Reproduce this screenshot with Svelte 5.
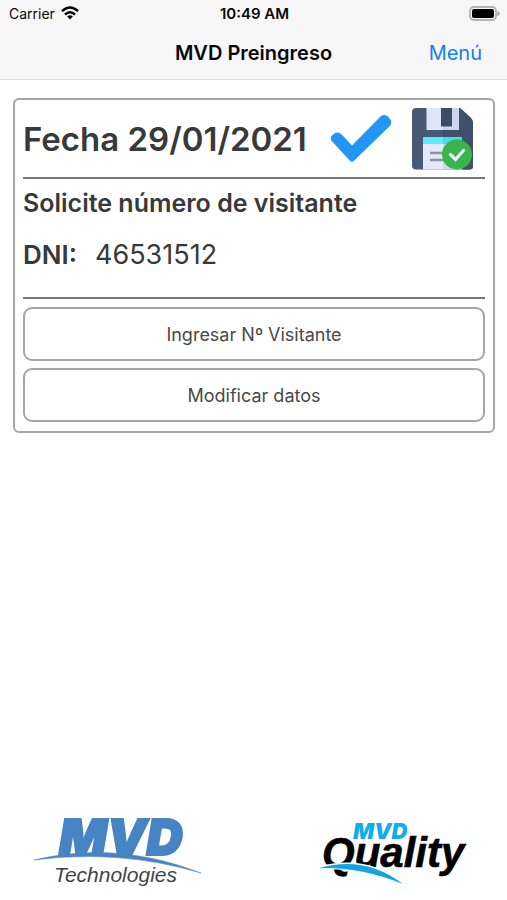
<script>
  const date = '29/01/2021';
  const dni = '46531512';
  const actions = ['Ingresar Nº Visitante', 'Modificar datos'];
</script>

<div class="screen">
  <header>
    <div class="status">
      <span class="carrier">
        Carrier
        <svg width="18" height="14" viewBox="0 0 18 14" aria-hidden="true">
          <g fill="none" stroke="#000" stroke-width="2.5">
            <path d="M1 5.2Q9-2.2 17 5.2" />
            <path d="M4 8.5Q9 3.9 14 8.5" />
          </g>
          <path d="M6.2 10.4Q9 8 11.8 10.4L9 13.4Z" />
        </svg>
      </span>
      <span class="time">10:49 AM</span>
      <svg class="battery" width="31" height="15" viewBox="0 0 31 15" aria-hidden="true">
        <rect x="1" y="1" width="26" height="13" rx="4" fill="#f7f6f7" stroke="#b3b3b3" stroke-width="1.8" />
        <rect x="3" y="3" width="22" height="9" rx="2" />
        <path d="M28.3 5Q30.7 5.5 30.7 7.5T28.3 10Z" fill="#aaa" />
      </svg>
    </div>
    <nav>
      <h1>MVD Preingreso</h1>
      <button class="menu" type="button">Menú</button>
    </nav>
  </header>

  <main>
    <section class="card">
      <div class="top">
        <h2>Fecha {date}</h2>
        <svg class="check" width="62" height="50" viewBox="0 0 62 50" aria-hidden="true">
          <path d="M2.2 21.3Q-.8 24.5 2.4 27.7L20 46.8Q22 48.6 24 46.8L59.5 12.2Q63 8.2 59.8 4.7L58 2.6Q54 -.8 50 3L22 31.5L12.2 20.9Q8.5 17.4 5 19Z" fill="#2196f3" />
        </svg>
        <svg class="disk" width="62" height="62" viewBox="0 0 62 62" aria-hidden="true">
          <path d="M4 0H48L58.5 9.5Q61 12 61 15V58Q61 61.5 57.5 61.5H4Q0 61.5 0 57.5V4Q0 0 4 0Z" fill="#475975" />
          <path d="M31 0H48L58.5 9.5Q61 12 61 15V58Q61 61.5 57.5 61.5H31Z" fill="#3f506b" />
          <path d="M14.5 0H47V22H14.5Z" fill="#dfe5f9" />
          <path d="M31 0H47V22H31Z" fill="#ccd5ec" />
          <path d="M29 0H40V18.5H29Z" fill="#3c4d67" />
          <path d="M11 29H50V61.5H11Z" fill="#e3e8fb" />
          <path d="M31 29H50V61.5H31Z" fill="#ccd5ec" />
          <path d="M11 29H50V36H11Z" fill="#5cebf7" />
          <path d="M31 29H50V36H31Z" fill="#45dceb" />
          <path d="M18 45H34M18 52H34" stroke="#8c91a3" stroke-width="2.5" />
          <circle cx="45" cy="46.5" r="15" fill="#38b44a" />
          <path d="M38.5 46.5L43.5 51.5L51.5 42.5" fill="none" stroke="#e8f0ff" stroke-width="3.2" stroke-linecap="round" />
        </svg>
      </div>
      <div class="details">
        <h3>Solicite número de visitante</h3>
        <dl>
          <dt>DNI:</dt>
          <dd>{dni}</dd>
        </dl>
      </div>
      <div class="actions">
        {#each actions as action}
          <button type="button">{action}</button>
        {/each}
      </div>
    </section>
  </main>

  <footer>
    <svg width="170" height="78" viewBox="0 0 170 78" role="img" aria-label="MVD Technologies">
      <text x="26" y="42" font-size="50" class="brand" fill="#4684c4" stroke="#4684c4" stroke-width="2">MVD</text>
      <path d="M1 47Q83 27 168 60Q86 36 1 47Z" fill="#4684c4" stroke="#4684c4" stroke-width="0.5" />
      <text x="21" y="69" font-size="21" class="tech">Technologies</text>
    </svg>
    <svg width="148" height="68" viewBox="0 0 148 68" role="img" aria-label="MVD Quality">
      <text x="3" y="49" font-size="42" class="quality">Quality</text>
      <text x="34" y="21" font-size="22" class="brand" fill="#10ade9">MVD</text>
      <path d="M0 50Q46 37 84 66Q43 48 0 50Z" fill="#fff" stroke="#fff" stroke-width="3" />
      <path d="M0 50Q46 37 84 66Q43 49 0 50Z" fill="#10a5e4" />
    </svg>
  </footer>
</div>

<style>
  :global(body) {
    margin: 0;
    background: #fff;
  }
  .screen {
    display: flex;
    flex-direction: column;
    min-height: 100vh;
    font-family: Inter, "Liberation Sans", sans-serif;
    color: #38393a;
  }
  header {
    background: #f7f6f7;
    border-bottom: 1px solid #dedede;
    color: #080808;
  }
  .status {
    display: grid;
    grid-template-columns: 1fr auto 1fr;
    align-items: center;
    height: 26px;
    padding: 0 7px 0 9px;
    font-size: 14px;
  }
  .carrier {
    display: flex;
    align-items: center;
    gap: 6px;
  }
  .time {
    font-size: 15px;
    font-weight: 600;
  }
  .battery {
    justify-self: end;
  }
  nav {
    display: grid;
    grid-template-columns: 1fr auto 1fr;
    align-items: center;
    height: 53px;
    padding: 0 25px;
  }
  h1,
  h2,
  h3,
  dl,
  dd {
    margin: 0;
  }
  h1 {
    grid-column: 2;
    font-size: 20px;
    font-weight: 600;
  }
  button {
    font-family: inherit;
    cursor: pointer;
  }
  .menu {
    justify-self: end;
    padding: 0;
    border: 0;
    background: none;
    color: #147efb;
    font-size: 20px;
  }
  main {
    flex: 1;
    padding: 18px 12px 24px 13px;
  }
  .card {
    padding: 0 8px 9px;
    border: 2px solid #a6a6a6;
    border-radius: 6px;
  }
  .top {
    display: flex;
    align-items: center;
    height: 77px;
    padding-right: 11px;
    border-bottom: 2px solid #777;
  }
  h2 {
    flex: 1;
    font-size: 33px;
    font-weight: 600;
    white-space: nowrap;
  }
  .disk {
    margin-left: 20px;
  }
  .details {
    height: 118px;
    border-bottom: 2px solid #777;
  }
  h3 {
    padding-top: 8px;
    font-size: 25px;
    line-height: 32px;
    font-weight: 600;
  }
  dl {
    display: flex;
    gap: 18px;
    padding-top: 20px;
    font-size: 26px;
    line-height: 32px;
  }
  dt {
    font-weight: 600;
  }
  dd {
    font-size: 27px;
  }
  .actions {
    display: grid;
    gap: 7px;
    padding-top: 8px;
  }
  .actions button {
    height: 54px;
    border: 2px solid #a6a6a6;
    border-radius: 9px;
    background: #fff;
    color: #48494a;
    font-size: 18px;
  }
  footer {
    display: flex;
    justify-content: space-between;
    align-items: center;
    padding: 0 40px 9px 33px;
  }
  footer svg {
    overflow: visible;
  }
  .brand {
    font-family: Inter, sans-serif;
    font-weight: 900;
    font-style: italic;
  }
  .tech {
    font-family: "Liberation Sans", sans-serif;
    font-style: italic;
    fill: #444;
  }
  .quality {
    font-family: "Liberation Sans", sans-serif;
    font-weight: 700;
    font-style: italic;
    fill: #000;
    stroke: #000;
    stroke-width: 0.6;
  }
</style>
